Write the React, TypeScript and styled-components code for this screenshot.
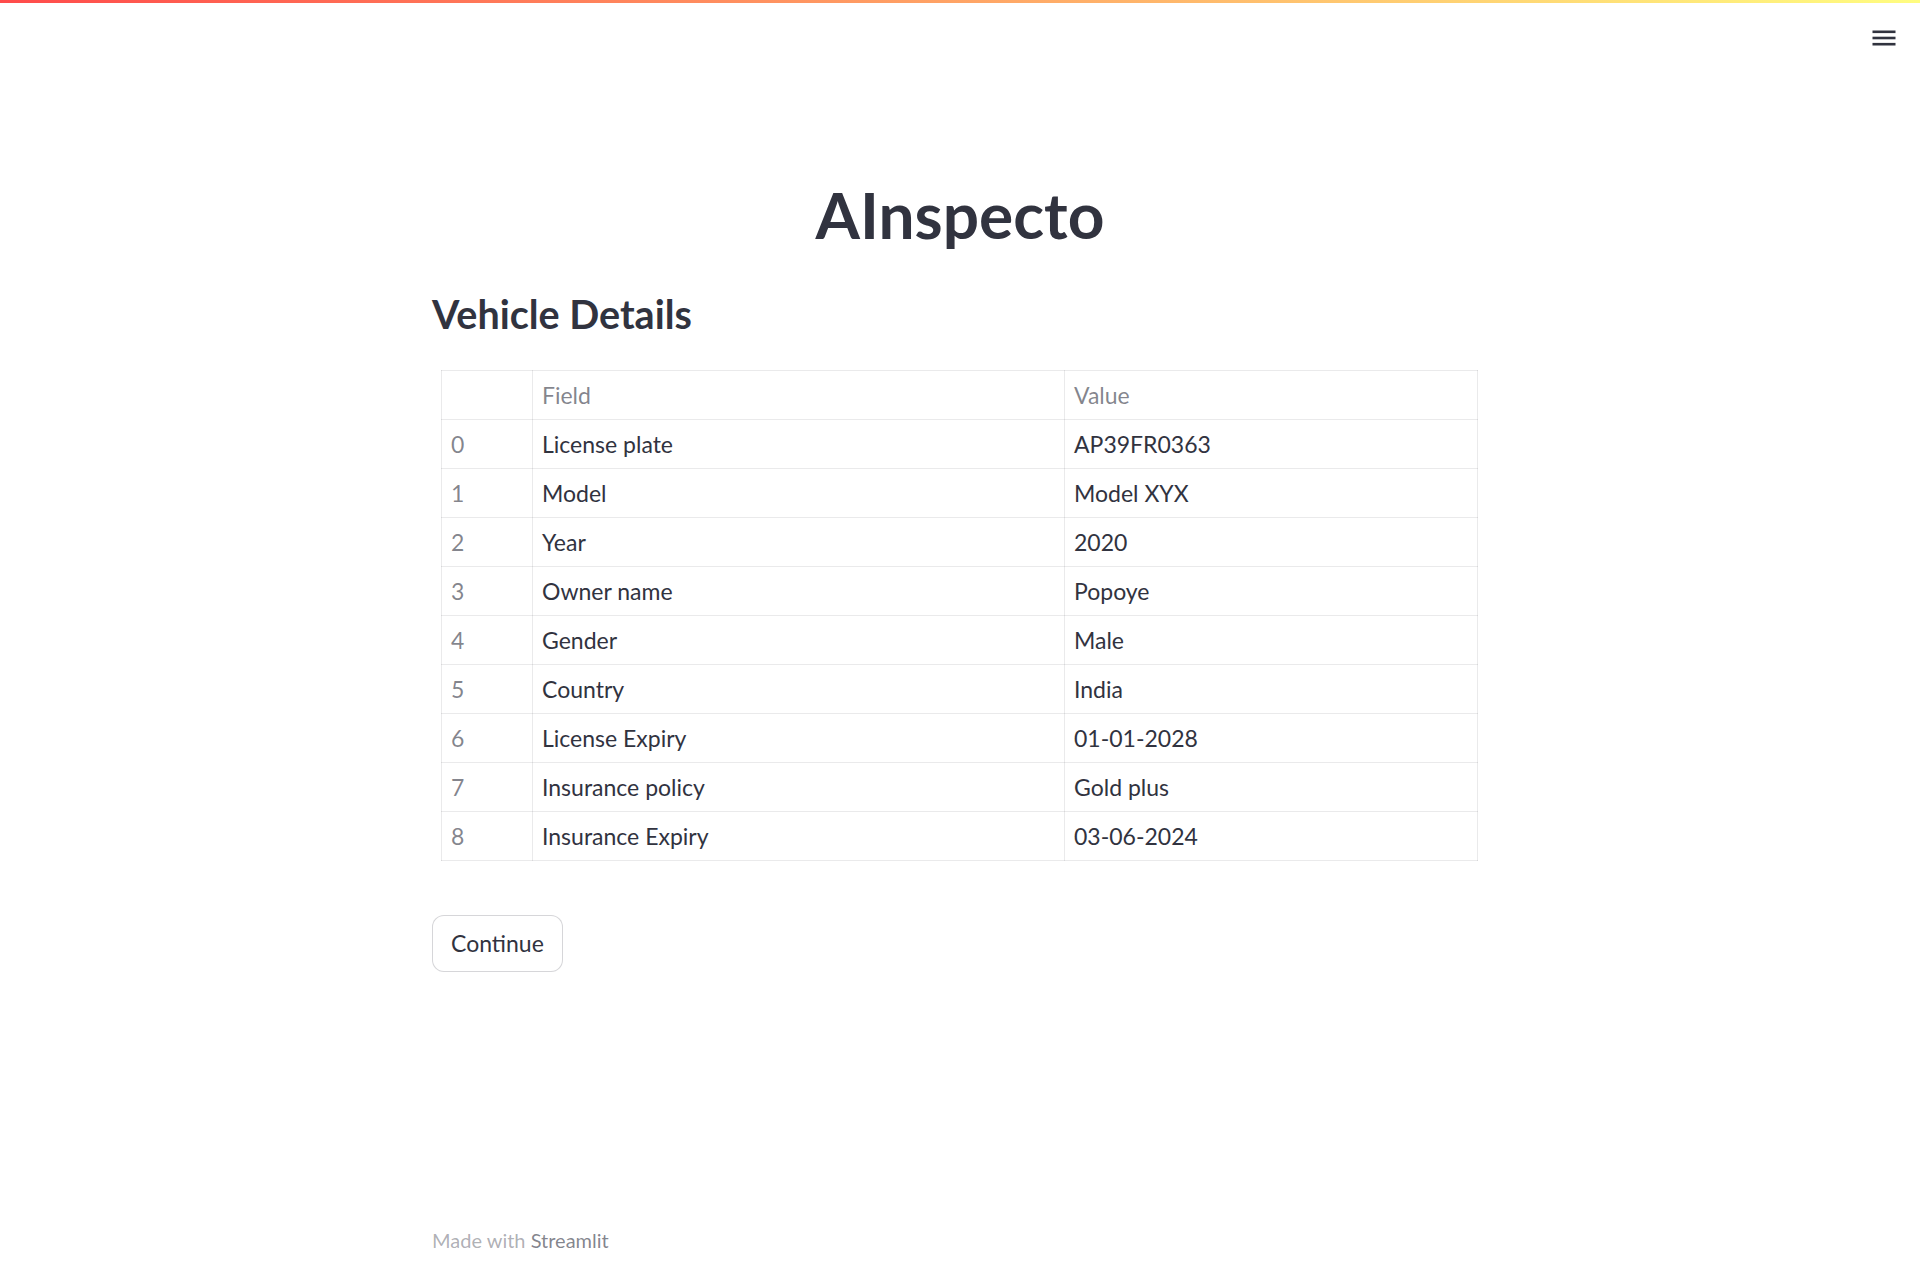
import React from "react";
import styled, { createGlobalStyle } from "styled-components";

const GlobalStyle = createGlobalStyle`
  html, body {
    margin: 0;
    padding: 0;
    background: #ffffff;
    color: #31333f;
    font-family: Lato, "Noto Sans", sans-serif;
  }
  * { box-sizing: border-box; }
`;

const Decoration = styled.div`
  position: fixed;
  top: 0;
  left: 0;
  right: 0;
  height: 3px;
  background-image: linear-gradient(90deg, rgb(255, 75, 75), rgb(255, 253, 128));
  z-index: 10;
`;

const MenuButton = styled.button`
  position: fixed;
  top: 21px;
  right: 16px;
  width: 40px;
  height: 34px;
  border: none;
  background: transparent;
  padding: 0;
  display: flex;
  align-items: center;
  justify-content: center;
  cursor: pointer;
  color: #31333f;
`;

const Page = styled.div`
  min-height: 100vh;
  display: flex;
  flex-direction: column;
`;

const Block = styled.main`
  width: 1056px;
  margin: 0 auto;
  padding-top: 177px;
  flex: 1;
  display: flex;
  flex-direction: column;
`;

const Title = styled.h1`
  margin: 0;
  font-size: 64px;
  font-weight: 700;
  line-height: 1.2;
  text-align: center;
  color: #31333f;
`;

const Subtitle = styled.h2`
  margin: 36px 0 0;
  font-size: 39.5px;
  font-weight: 700;
  line-height: 1.2;
  color: #31333f;
`;

const TableWrap = styled.div`
  margin: 33px 10px 0 9px;
`;

const Table = styled.table`
  width: 100%;
  border-collapse: collapse;
  font-size: 23px;
  color: #31333f;
`;

const Cell = styled.td<{ $muted?: boolean; $w?: number }>`
  height: 49px;
  padding: 0 9px;
  border: 1px solid rgba(49, 51, 63, 0.1);
  color: ${(p) => (p.$muted ? "rgba(49, 51, 63, 0.6)" : "#31333f")};
  width: ${(p) => (p.$w ? `${p.$w}px` : "auto")};
  text-align: left;
  font-weight: 400;
  vertical-align: middle;
`;

const HeadCell = styled(Cell).attrs({ as: "th" })``;

const Button = styled.button`
  margin-top: 54px;
  align-self: flex-start;
  height: 57px;
  padding: 0 18px;
  border: 1px solid rgba(49, 51, 63, 0.2);
  border-radius: 12px;
  background: #ffffff;
  color: #31333f;
  font-family: inherit;
  font-size: 23px;
  line-height: 1.6;
  cursor: pointer;
`;

const Footer = styled.footer`
  width: 1056px;
  margin: 0 auto;
  padding: 0 0 18px;
  font-size: 20px;
  color: rgba(49, 51, 63, 0.4);
`;

const FooterLink = styled.a`
  color: rgba(49, 51, 63, 0.6);
  text-decoration: none;
`;

const rows: [string, string][] = [
  ["License plate", "AP39FR0363"],
  ["Model", "Model XYX"],
  ["Year", "2020"],
  ["Owner name", "Popoye"],
  ["Gender", "Male"],
  ["Country", "India"],
  ["License Expiry", "01-01-2028"],
  ["Insurance policy", "Gold plus"],
  ["Insurance Expiry", "03-06-2024"],
];

const MenuIcon = () => (
  <svg width="24" height="24" viewBox="0 0 24 24" fill="none">
    <rect x="0.5" y="4.5" width="23" height="2.6" fill="currentColor" />
    <rect x="0.5" y="10.7" width="23" height="2.6" fill="currentColor" />
    <rect x="0.5" y="16.9" width="23" height="2.6" fill="currentColor" />
  </svg>
);

export default function App() {
  return (
    <Page>
      <GlobalStyle />
      <Decoration />
      <MenuButton aria-label="menu">
        <MenuIcon />
      </MenuButton>
      <Block>
        <Title>AInspecto</Title>
        <Subtitle>Vehicle Details</Subtitle>
        <TableWrap>
          <Table>
            <thead>
              <tr>
                <HeadCell $w={91} />
                <HeadCell $muted $w={532}>Field</HeadCell>
                <HeadCell $muted>Value</HeadCell>
              </tr>
            </thead>
            <tbody>
              {rows.map(([f, v], i) => (
                <tr key={f}>
                  <Cell $muted>{i}</Cell>
                  <Cell>{f}</Cell>
                  <Cell>{v}</Cell>
                </tr>
              ))}
            </tbody>
          </Table>
        </TableWrap>
        <Button>Continue</Button>
      </Block>
      <Footer>
        Made with <FooterLink href="#">Streamlit</FooterLink>
      </Footer>
    </Page>
  );
}
